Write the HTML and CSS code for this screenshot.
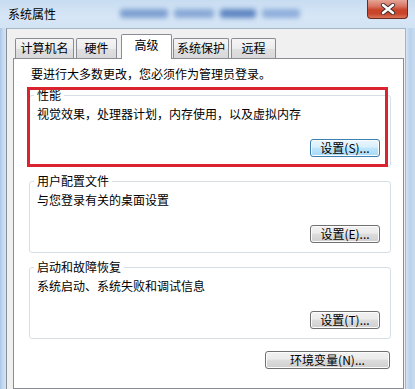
FILE: index.html
```html
<!DOCTYPE html>
<html lang="zh-CN">
<head>
<meta charset="utf-8">
<title>系统属性</title>
<link rel="stylesheet" href="styles.css">
</head>
<body>
<div class="window">
  <div class="titlebar">
    <span class="title">系统属性</span>
    <div class="blurred"><i class="b1"></i><i class="b2"></i><i class="b3"></i><i class="b4"></i></div>
    <div class="close">
      <svg width="16" height="12" viewBox="0 0 16 12"><path d="M3 2 L13 10 M13 2 L3 10" stroke="#3a2a2a" stroke-width="4.2" stroke-linecap="round"/><path d="M3 2 L13 10 M13 2 L3 10" stroke="#ffffff" stroke-width="2.6" stroke-linecap="round"/></svg>
    </div>
  </div>
  <div class="client">
    <div class="tabs">
      <div class="tab t1">计算机名</div>
      <div class="tab t2">硬件</div>
      <div class="tab sel">高级</div>
      <div class="tab t4">系统保护</div>
      <div class="tab t5">远程</div>
    </div>
    <div class="panel">
      <p class="note">要进行大多数更改，您必须作为管理员登录。</p>
      <fieldset class="group">
        <legend>性能</legend>
        <p class="desc">视觉效果，处理器计划，内存使用，以及虚拟内存</p>
        <div class="btnrow"><button class="btn hot">设置(S)...</button></div>
      </fieldset>
      <fieldset class="group">
        <legend>用户配置文件</legend>
        <p class="desc">与您登录有关的桌面设置</p>
        <div class="btnrow"><button class="btn">设置(E)...</button></div>
      </fieldset>
      <fieldset class="group">
        <legend>启动和故障恢复</legend>
        <p class="desc">系统启动、系统失败和调试信息</p>
        <div class="btnrow"><button class="btn">设置(T)...</button></div>
      </fieldset>
      <div class="envrow"><button class="btn env">环境变量(N)...</button></div>
      <div class="highlight"></div>
    </div>
  </div>
</div>
</body>
</html>
```

FILE: styles.css
```css
* { box-sizing: border-box; }
html, body { margin: 0; padding: 0; }
body {
  font-family: "Noto Sans CJK SC", "Noto Sans", sans-serif;
  font-size: 12px;
  color: #000;
  background: #cfe0f2;
}
.window {
  width: 415px;
  height: 389px;
  display: flex;
  flex-direction: column;
  overflow: hidden;
  background: linear-gradient(90deg, #a9c6e6 0, #c6dbf1 3px, #d3e3f4 6px, #d3e3f4 406px, #b9d1ea 410px, #c9dcf0 415px);
}
.titlebar {
  height: 28px;
  display: flex;
  align-items: flex-start;
  background: linear-gradient(180deg, #c8dcf1 0, #d6e6f6 60%, #d2e3f4 100%);
}
.title {
  margin: 6px 0 0 8px;
  line-height: 16px;
}
.blurred {
  margin: 5px 0 0 64px;
  width: 185px;
  height: 16px;
  display: flex;
  align-items: center;
  gap: 6px;
  filter: blur(2.5px);
}
.blurred i { display: block; height: 9px; background: #6f93c8; border-radius: 3px; }
.blurred .b1 { width: 48px; background: #7d9fd0; }
.blurred .b2 { width: 40px; background: #88a8d6; }
.blurred .b3 { width: 36px; background: #5f86c2; }
.blurred .b4 { width: 38px; background: #8eaedb; }
.close {
  margin-left: auto;
  margin-right: 7px;
  width: 41px;
  height: 19px;
  border: 1px solid #6b2a22;
  border-top: none;
  border-radius: 0 0 4px 4px;
  background: linear-gradient(180deg, #e6a597 0, #d87462 35%, #c8442a 55%, #c8442a 75%, #d9745a 100%);
  display: flex;
  align-items: center;
  justify-content: center;
}
.client {
  flex: 1;
  margin: 0 9px 0 6px;
  border-left: 1px solid #8a9097;
  border-top: 1px solid #a7b6c7;
  border-right: 1px solid #a7b6c7;
  background: #f0f0f0;
  padding: 5px 1px 0 6px;
  display: flex;
  flex-direction: column;
}
.tabs {
  display: flex;
  align-items: flex-end;
  height: 24px;
}
.tab {
  height: 20px;
  border: 1px solid #898c95;
  border-bottom: none;
  border-radius: 2px 2px 0 0;
  background: linear-gradient(180deg, #f5f5f5 0, #ececec 50%, #e0e0e0 51%, #d8d8d8 100%);
  line-height: 18px;
  text-align: center;
  white-space: nowrap;
}
.t1 { margin-left: 2px; width: 59px; }
.t2 { margin-left: 2px; width: 41px; }
.sel {
  margin-left: 4px;
  width: 51px;
  height: 25px;
  margin-bottom: -1px;
  background: #ffffff;
  position: relative;
  z-index: 1;
  line-height: 20px;
}
.t4 { margin-left: 1px; width: 56px; }
.t5 { margin-left: 2px; width: 45px; }
.panel {
  flex: 1;
  position: relative;
  background: #ffffff;
  border: 1px solid #898c95;
  padding: 8px 12px 0 15px;
}
.note {
  margin: 0 0 7px 2px;
  line-height: 14px;
}
.group {
  margin: 0 0 7px 0;
  padding: 5px 10px 9px 7px;
  border: 1px solid #d5dfe5;
  border-radius: 3px;
  min-width: 0;
}
.group legend {
  padding: 0 3px;
  margin-left: -3px;
  line-height: 14px;
}
.desc {
  margin: 0;
  line-height: 14px;
}
.btnrow {
  margin-top: 18px;
  display: flex;
  justify-content: flex-end;
}
.btn {
  font-family: "Noto Sans CJK SC", "Noto Sans", sans-serif;
  font-size: 12px;
  color: #000;
  width: 70px;
  height: 18px;
  padding: 0;
  line-height: 14px;
  border: 1px solid #707070;
  border-radius: 3px;
  background: linear-gradient(180deg, #f2f2f2 0, #ebebeb 45%, #dddddd 50%, #cfcfcf 100%);
  box-shadow: inset 0 0 0 1px #fcfcfc;
}
.btn.hot {
  border-color: #3c7fb1;
  background: linear-gradient(180deg, #eaf6fd 0, #d9f0fc 45%, #bee6fd 50%, #a7d9f5 100%);
}
.envrow {
  margin-top: 12px;
  padding-right: 1px;
  display: flex;
  justify-content: flex-end;
}
.btn.env { width: 125px; }
.highlight {
  position: absolute;
  left: 13px;
  top: 28px;
  width: 361px;
  height: 80px;
  border: 3px solid #d9232e;
  pointer-events: none;
}
```
